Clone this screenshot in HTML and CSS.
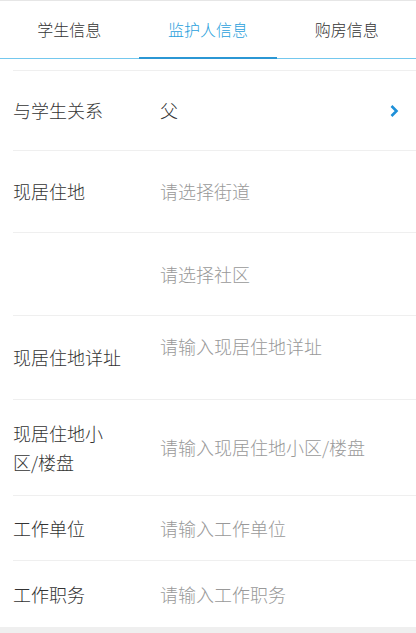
FILE: index.html
```html
<!DOCTYPE html>
<html lang="zh-CN">
<head>
<meta charset="utf-8">
<link rel="stylesheet" href="styles.css">
</head>
<body>
<div class="page">
  <nav class="tabs">
    <div class="tab">学生信息</div>
    <div class="tab active">监护人信息</div>
    <div class="tab">购房信息</div>
  </nav>
  <div class="form">
    <div class="row r1">
      <div class="label">与学生关系</div>
      <div class="value filled">父</div>
      <svg class="chev" width="10" height="14" viewBox="0 0 10 14"><polyline points="2.5,2 7.5,7 2.5,12" fill="none" stroke="#1e90d8" stroke-width="2.6"/></svg>
    </div>
    <div class="row r2">
      <div class="label">现居住地</div>
      <div class="value">请选择街道</div>
    </div>
    <div class="row r3">
      <div class="label"></div>
      <div class="value">请选择社区</div>
    </div>
    <div class="row r4">
      <div class="label wide">现居住地详址</div>
      <div class="value top">请输入现居住地详址</div>
    </div>
    <div class="row r5">
      <div class="label">现居住地小区/楼盘</div>
      <div class="value">请输入现居住地小区/楼盘</div>
    </div>
    <div class="row r6">
      <div class="label">工作单位</div>
      <div class="value">请输入工作单位</div>
    </div>
    <div class="row r7">
      <div class="label">工作职务</div>
      <div class="value">请输入工作职务</div>
    </div>
  </div>
  <div class="footer-band"></div>
</div>
</body>
</html>
```
FILE: styles.css
```css
* { box-sizing: border-box; }
html, body { margin: 0; padding: 0; background: #fff; }
body {
  font-family: "Noto Sans CJK SC", "Noto Sans", sans-serif;
  font-weight: 300;
  color: #333;
  width: 416px;
  height: 633px;
  overflow: hidden;
}
.page { display: flex; flex-direction: column; height: 633px; }
.tabs {
  display: flex;
  height: 59px;
  border-top: 1px solid #e6e6e6;
  border-bottom: 1px solid #74c8ee;
  flex: none;
}
.tab {
  flex: 1;
  display: flex;
  align-items: center;
  justify-content: center;
  font-size: 16px;
  color: #333;
  position: relative;
  padding-bottom: 1px;
}
.tab.active { color: #2a9fdc; }
.tab.active::after {
  content: "";
  position: absolute;
  left: 0; right: 0; bottom: -1px;
  height: 2px;
  background: #2b97d4;
}
.form {
  margin-top: 11px;
  margin-left: 13px;
  border-top: 1px solid #efefef;
  flex: none;
}
.row {
  display: flex;
  align-items: center;
  border-bottom: 1px solid #efefef;
  font-size: 18px;
  line-height: 29px;
}
.label { width: 100px; margin-right: 47px; color: #333; flex: none; }
.label.wide { width: 120px; margin-right: 27px; }
.value { flex: 1; color: #999; }
.value.filled { color: #333; }
.value.top { align-self: flex-start; padding-top: 16px; }
.chev { margin-right: 17px; flex: none; }
.r1 { height: 80px; }
.r2 { height: 82px; }
.r3 { height: 83px; }
.r4 { height: 84px; }
.r5 { height: 96px; }
.r6 { height: 65px; }
.r7 { height: 66px; border-bottom: none; }
.footer-band { flex: 1; background: #efefef; }
```
